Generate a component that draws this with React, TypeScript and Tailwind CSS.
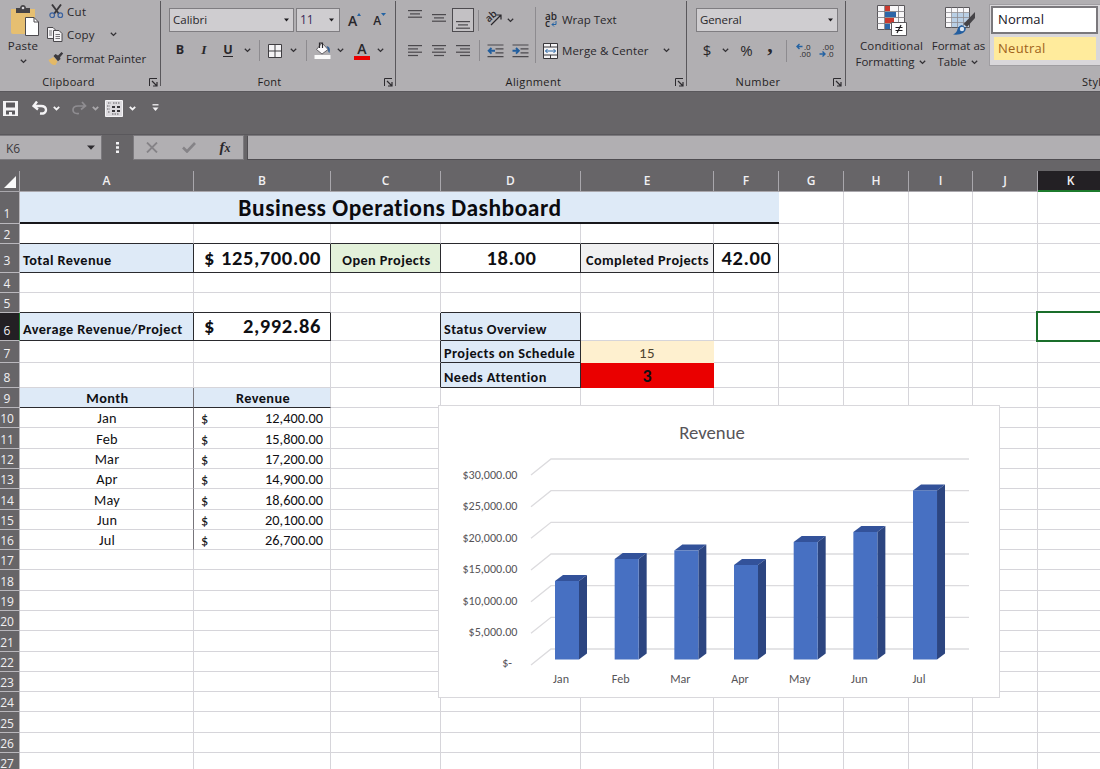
import React from "react";

const CALIBRI = "font-['Carlito','Lato',sans-serif]";

function Chevron({ light = false, dim = false }: { light?: boolean; dim?: boolean }) {
  return (
    <svg width="7" height="5" viewBox="0 0 7 5" className="shrink-0">
      <path d="M0.8 0.8 L3.5 3.4 L6.2 0.8" fill="none" strokeWidth={light ? 1.8 : 1.3} stroke={dim ? "#a9a7aa" : light ? "#f4f3f5" : "#333135"} />
    </svg>
  );
}

function Caret() {
  return (
    <svg width="5" height="4" viewBox="0 0 5 4" className="shrink-0">
      <path d="M0 0.5 H5 L2.5 3.6 Z" fill="#1d1b1f" />
    </svg>
  );
}

function Slot({ className, children }: { className: string; children?: React.ReactNode }) {
  return <div className={`flex h-full shrink-0 items-center justify-center ${className}`}>{children}</div>;
}

function Launcher() {
  return (
    <svg width="9" height="9" viewBox="0 0 9 9" className="shrink-0">
      <path d="M0.5 8 V0.5 H8" fill="none" stroke="#2d2b2f" />
      <path d="M3 3 L7.5 7.5 M8 4 V8 H4" fill="none" stroke="#2d2b2f" strokeWidth="1.2" />
    </svg>
  );
}

function Group({ width, label, labelClass, launcher = true, children }: { width: string; label: string; labelClass: string; launcher?: boolean; children: React.ReactNode }) {
  return (
    <div className={`flex h-[91px] shrink-0 flex-col ${width}`}>
      <div className="h-[73px] shrink-0">{children}</div>
      <div className="flex h-[18px] items-center text-[11px] text-[#1f1d21]">
        <span className={`shrink-0 whitespace-nowrap text-center ${labelClass}`}>{label}</span>
        {launcher && <Launcher />}
      </div>
    </div>
  );
}

function Divider() {
  return <div className="mt-px h-[85px] w-px shrink-0 bg-[#59575b]" />;
}

function Lines({ rows, offset = 0 }: { rows: number[][]; offset?: number }) {
  return (
    <svg width="15" height="14" viewBox="0 0 15 14" className="shrink-0">
      {rows.map(([x, w], i) => (
        <rect key={i} x={x} y={offset + i * 3.3} width={w} height="1.2" fill="#4b494d" />
      ))}
    </svg>
  );
}

function PasteIcon() {
  return (
    <svg width="30" height="32" viewBox="0 0 30 32">
      <path d="M1 5 H25 V30 H3 Q1 30 1 28Z" fill="#e6bf71" />
      <path d="M6 4 H10 Q10.500 1 13 1 Q15.500 1 16 4 H20 V9 H6Z" fill="#454347" />
      <circle cx="13" cy="4" r="1.300" fill="#d8d6da" />
      <path d="M15.500 13.500 H24 L28.500 18 V31.500 H15.500Z" fill="#fff" stroke="#4c4a4e" />
      <path d="M24 13.500 V18 H28.500" fill="none" stroke="#4c4a4e" />
    </svg>
  );
}

function CutIcon() {
  return (
    <svg width="15" height="15" viewBox="0 0 15 15">
      <path d="M3 0.5 L10 10 M12 0.5 L5 10" stroke="#3a383c" strokeWidth="1.900" />
      <circle cx="3.200" cy="11.200" r="2.300" fill="none" stroke="#3a62a0" strokeWidth="1.200" />
      <circle cx="11.300" cy="11.200" r="2.300" fill="none" stroke="#3a62a0" strokeWidth="1.200" />
    </svg>
  );
}

function CopyIcon() {
  return (
    <svg width="16" height="15" viewBox="0 0 16 15">
      <path d="M0.5 0.5 H6 L8.500 3 V11.500 H0.500Z" fill="#f5f4f6" stroke="#4a484c" />
      <path d="M2 4 H5 M2 6 H5 M2 8 H5" stroke="#6a686c" strokeWidth="0.900" />
      <path d="M6.500 3.500 H12 L15 6.500 V14.500 H6.500Z" fill="#f5f4f6" stroke="#4a484c" />
      <path d="M8.500 7.500 H13 M8.500 9.500 H13 M8.500 11.500 H13" stroke="#6a686c" strokeWidth="0.900" />
    </svg>
  );
}

function BrushIcon() {
  return (
    <svg width="16" height="15" viewBox="0 0 16 15">
      <path d="M0.500 9 L5.500 6 L9.500 10.500 L7.500 14 Q3 14.500 0.500 9Z" fill="#e3b967" />
      <path d="M5.500 5 L7.500 3 L10 4.500 L13.500 1 L15.200 2.600 L12 6.300 L12.500 8 L10 10.200Z" fill="#3b393d" />
    </svg>
  );
}

function Ribbon() {
  return (
    <div className="flex h-[91px] shrink-0 overflow-hidden bg-[#b1afb2] text-[11.5px] text-[#29272b]">
      <Group width="w-[160px]" label="Clipboard" labelClass="w-[137px] mr-[12px] tracking-[0.3px]">
        <div className="flex h-full">
          <div className="flex w-[46px] shrink-0 flex-col items-center pt-[4px]">
            <div className="pl-[4px]"><PasteIcon /></div>
            <span className="mt-[1px] leading-[18px] tracking-[0.2px]">Paste</span>
            <div className="mt-[4px]"><Chevron /></div>
          </div>
          <div className="flex flex-col whitespace-nowrap">
            <div className="flex h-[23px] items-center pl-[3px]"><CutIcon /><span className="ml-[3px] tracking-[0.3px]">Cut</span></div>
            <div className="flex h-[23px] items-center pl-[1px]">
              <CopyIcon /><span className="ml-[4px] w-[43px] tracking-[0.2px]">Copy</span><Chevron />
            </div>
            <div className="flex h-[25px] items-center pl-[2px]"><BrushIcon /><span className="ml-[2px]">Format Painter</span></div>
          </div>
        </div>
      </Group>
      <Divider />
      <Group width="w-[234px]" label="Font" labelClass="w-[217px] mr-[6px] tracking-[0.2px]">
        <div className="flex h-[32px] items-end pl-[8px]">
          <div className="flex h-[24px] w-[125px] items-center justify-between border border-[#7f7d81] bg-[#cfcdd0] px-[3px] pr-[4px]">
            <span>Calibri</span><Caret />
          </div>
          <div className="ml-[2px] flex h-[24px] w-[44px] items-center justify-between border border-[#7f7d81] bg-[#cfcdd0] px-[3px] pr-[5px]">
            <span className="text-[12px] text-[#3b2858]">11</span><Caret />
          </div>
          <div className="ml-[8px] flex h-[24px] items-center font-semibold">
            <span className="text-[14px]">A</span>
            <svg width="4" height="3" viewBox="0 0 4 3" className="mb-[11px]"><path d="M0 3 H4 L2 0Z" fill="#2463a3" /></svg>
          </div>
          <div className="ml-[12px] flex h-[24px] items-center font-semibold">
            <span className="pt-[2px] text-[12px]">A</span>
            <svg width="5" height="3" viewBox="0 0 5 3" className="mb-[12px]"><path d="M0 0 H5 L2.500 3Z" fill="#2463a3" /></svg>
          </div>
        </div>
        <div className="flex h-[37px] items-center pl-[7px]">
          <Slot className="w-[24px] text-[12.5px] font-bold">B</Slot>
          <Slot className="w-[24px] font-['Liberation_Serif',serif] text-[13.5px] font-bold italic">I</Slot>
          <Slot className="w-[24px]"><span className="border-b border-[#29272b] text-[12.5px] font-bold leading-[12px]">U</span></Slot>
          <Slot className="w-[14px]"><Chevron /></Slot>
          <Slot className="w-[11px]"><i className="h-[21px] w-px bg-[#8d8b8f]" /></Slot>
          <Slot className="w-[20px]">
            <svg width="14" height="14" viewBox="0 0 14 14"><path d="M0.500 0.500 H13.500 V13.500 H0.500Z" fill="#f5f4f6" stroke="#3f3d41" /><path d="M7 0 V14 M0 7 H14" stroke="#3f3d41" /></svg>
          </Slot>
          <Slot className="w-[16px]"><Chevron /></Slot>
          <Slot className="w-[11px]"><i className="h-[21px] w-px bg-[#8d8b8f]" /></Slot>
          <Slot className="w-[21px]">
            <svg width="18" height="17" viewBox="0 0 18 17">
              <path d="M8 1 L14 7.500 L8 12 L2.500 7.500Z" fill="#fbfafc" stroke="#4a484c" strokeWidth="0.800" />
              <path d="M5.500 6 V1 H8.500 V6" fill="none" stroke="#2b292d" strokeWidth="1.200" />
              <path d="M12.500 4 Q17 4.500 15.500 11 Q14 10.500 14 7.500Z" fill="#305e94" />
              <rect x="0.500" y="13" width="16" height="4" fill="#fafafa" />
            </svg>
          </Slot>
          <Slot className="w-[15px]"><Chevron /></Slot>
          <Slot className="w-[28px]">
            <div className="flex w-[16px] flex-col items-center">
              <span className="text-[14px] font-semibold leading-[14px]">A</span><i className="h-[4px] w-[16px] bg-[#ea0000]" />
            </div>
          </Slot>
          <Slot className="w-[8px]"><Chevron /></Slot>
        </div>
      </Group>
      <Divider />
      <Group width="w-[290px]" label="Alignment" labelClass="w-[275px] mr-[4px] tracking-[0.4px]">
        <div className="flex h-full">
          <div className="w-[139px] shrink-0">
            <div className="flex h-[32px] items-end pl-[7px]">
              <Slot className="h-[32px] w-[24px]"><Lines rows={[[0, 14], [2, 10], [0, 14]]} offset={1} /></Slot>
              <Slot className="h-[32px] w-[25px]"><Lines rows={[[0, 14], [2, 10], [0, 14]]} offset={5} /></Slot>
              <div className="flex h-[24px] w-[22px] shrink-0 items-end justify-center border border-[#4d4b4f] bg-[#c3c1c4] pb-[1px]"><Lines rows={[[0, 14], [2, 10], [0, 14]]} offset={5} /></div>
              <Slot className="w-[9px]"><i className="mt-[8px] h-[21px] w-px bg-[#8d8b8f]" /></Slot>
              <Slot className="w-[22px] pt-[4px]">
                <svg width="18" height="16" viewBox="0 0 18 16" className="overflow-visible">
                  <text x="0" y="11" fontSize="10" fontWeight="600" fill="#29272b" transform="rotate(-42 4 7)">ab</text>
                  <path d="M6 15 L15.500 5.500 M11.500 5 H16 V9.500" fill="none" stroke="#29272b" strokeWidth="1.200" />
                </svg>
              </Slot>
              <Slot className="w-[11px] pt-[8px]"><Chevron /></Slot>
            </div>
            <div className="flex h-[37px] items-center pl-[7px]">
              <Slot className="w-[24px]"><Lines rows={[[0, 14], [0, 10], [0, 14], [0, 10]]} offset={1} /></Slot>
              <Slot className="w-[25px]"><Lines rows={[[0, 14], [2, 10], [0, 14], [2, 10]]} offset={1} /></Slot>
              <Slot className="w-[23px]"><Lines rows={[[0, 14], [4, 10], [0, 14], [4, 10]]} offset={1} /></Slot>
              <Slot className="w-[8px]"><i className="h-[21px] w-px bg-[#8d8b8f]" /></Slot>
              {[0, 1].map((k) => (
                <Slot key={k} className="w-[25px]">
                  <svg width="17" height="14" viewBox="0 0 17 14">
                    <path d="M0.500 1 H16.500 M8.500 4.900 H16.500 M8.500 8.800 H16.500 M0.500 12.700 H16.500" stroke="#4b494d" strokeWidth="1.200" />
                    <path d={k ? "M0.500 6.800 H6.500 M4 4 L6.800 6.800 L4 9.600" : "M2 6.800 H8 M4.500 4 L1.700 6.800 L4.500 9.600"} fill="none" stroke="#215e9e" strokeWidth="1.900" />
                  </svg>
                </Slot>
              ))}
            </div>
          </div>
          <i className="mt-[7px] h-[56px] w-px shrink-0 bg-[#8d8b8f]" />
          <div className="flex flex-col whitespace-nowrap pt-[4px]">
            <div className="flex h-[31px] items-center pl-[9px]">
              <svg width="14" height="16" viewBox="0 0 14 16" fill="#29272b" className="shrink-0 overflow-visible">
                <text x="0" y="7.500" fontSize="10" fontWeight="600">ab</text><text x="0" y="15" fontSize="10" fontWeight="600">c</text>
                <path d="M11 9 V12.500 H7 M9 10.500 L7 12.500 L9 14.500" fill="none" stroke="#2463a3" />
              </svg>
              <span className="ml-[3px]">Wrap Text</span>
            </div>
            <div className="flex h-[31px] items-center pl-[7px]">
              <svg width="15" height="16" viewBox="0 0 15 16" className="shrink-0">
                <path d="M0.500 0.500 H14.500 V15.500 H0.500Z M0.500 4 H14.500 M0.500 12 H14.500 M7.500 0.500 V4 M7.500 12 V15.500" fill="#f5f4f6" stroke="#38363a" />
                <path d="M2.500 8 H12.500 M4.500 6 L2.500 8 L4.500 10 M10.500 6 L12.500 8 L10.500 10" fill="none" stroke="#2463a3" />
              </svg>
              <span className="ml-[4px] w-[101px] tracking-[0.15px]">Merge &amp; Center</span><Chevron />
            </div>
          </div>
        </div>
      </Group>
      <Divider />
      <Group width="w-[158px]" label="Number" labelClass="w-[142px] mr-[4px] tracking-[0.4px]">
        <div className="flex h-[32px] items-end pl-[9px]">
          <div className="flex h-[24px] w-[142px] items-center justify-between border border-[#7f7d81] bg-[#cfcdd0] px-[3px] pr-[4px]"><span className="tracking-[-0.1px]">General</span><Caret /></div>
        </div>
        <div className="flex h-[37px] items-center pl-[9px]">
          <Slot className="w-[22px] text-[15px]">$</Slot>
          <Slot className="w-[14px]"><Chevron /></Slot>
          <Slot className="w-[29px] text-[15px]">%</Slot>
          <Slot className="w-[18px] pb-[12px] font-['Liberation_Serif',serif] text-[22px] font-bold leading-[20px]">,</Slot>
          <Slot className="w-[14px]"><i className="h-[22px] w-px bg-[#8d8b8f]" /></Slot>
          <Slot className="w-[22px]">
            <svg width="17" height="15" viewBox="0 0 17 15" fontSize="8" fill="#29272b" className="overflow-visible">
              <text x="8" y="6.500">.0</text><text x="3.500" y="14">.00</text>
              <path d="M1 3.500 H6.500 M3.500 1 L1 3.500 L3.500 6" fill="none" stroke="#2463a3" strokeWidth="1.400" />
            </svg>
          </Slot>
          <Slot className="w-[25px]">
            <svg width="17" height="15" viewBox="0 0 17 15" fontSize="8" fill="#29272b" className="overflow-visible">
              <text x="3.500" y="6.500">.00</text><text x="8" y="14">.0</text>
              <path d="M0.500 11 H6 M3.500 8.500 L6 11 L3.500 13.500" fill="none" stroke="#2463a3" strokeWidth="1.400" />
            </svg>
          </Slot>
        </div>
      </Group>
      <Divider />
      <Group width="w-[254px]" label="Styles" labelClass="ml-[236px] tracking-[0.3px]" launcher={false}>
        <div className="flex h-full">
          <div className="flex w-[91px] shrink-0 flex-col items-center pt-[5px] leading-[16px]">
            <svg width="32" height="31" viewBox="0 0 32 31">
              <path d="M1.500 0.500 H28.500 V24.500 H1.500Z" fill="#f8f7f9" stroke="#59575b" />
              <path d="M9 1 H14 V6 H9Z M9 13 H18 V18 H9Z" fill="#c9392f" />
              <path d="M9 7 H20 V12 H9Z M9 19 H14 V24 H9Z" fill="#2d66a8" />
              <path d="M1 6.500 H29 M1 12.500 H29 M1 18.500 H29 M8.500 0 V25 M22.500 0 V25" stroke="#77757a" strokeWidth="0.800" />
              <path d="M15.500 17.500 H30.500 V30.500 H15.500Z" fill="#fff" stroke="#59575b" />
              <path d="M19.500 22.500 H26.500 M19.500 25.500 H26.500 M25 20 L21 28" stroke="#1d1b1f" strokeWidth="1.200" />
            </svg>
            <span className="mt-[2px] tracking-[0.15px]">Conditional</span>
            <span className="flex items-center gap-[4px] pr-[2px]">Formatting<Chevron /></span>
          </div>
          <div className="flex w-[43px] shrink-0 flex-col items-center whitespace-nowrap pt-[6px] leading-[16px]">
            <svg width="31" height="30" viewBox="0 0 31 30" className="ml-[3px]">
              <path d="M0.500 1.500 H24.500 V21.500 H0.500Z" fill="#f8f7f9" stroke="#59575b" />
              <path d="M7 7 H24 V21 H7Z" fill="#b9cfe5" />
              <path d="M0.500 6.500 H24.500 M0.500 11.500 H24.500 M0.500 16.500 H24.500 M6.500 1.500 V21.500 M12.500 1.500 V21.500 M18.500 1.500 V21.500" stroke="#8d8b90" strokeWidth="0.800" />
              <path d="M30 6 V12 L22 21 L18.500 18Z" fill="#454347" />
              <path d="M17 19 L21 22.500 Q20 29.500 8 28.500 Q12 26.500 12.500 23 Q14 19.500 17 19Z" fill="#245e9f" />
              <circle cx="17" cy="23" r="2.200" fill="#dbe6f2" />
            </svg>
            <span className="mt-[2px]">Format as</span>
            <span className="flex items-center gap-[4px] pr-[2px]">Table<Chevron /></span>
          </div>
          <div className="ml-[9px] mt-[4px] h-[62px] w-[111px] shrink-0 border border-r-0 border-[#a09ea2] bg-[#d9d7da] pl-[1px] pt-[1px]">
            <div className="flex h-[28px] w-[107px] items-center border-2 border-[#7a787c] bg-white pl-[5px] text-[13px] tracking-[0.1px] text-[#15131d]">Normal</div>
            <div className="ml-[3px] mt-[3px] flex h-[23px] w-[102px] items-center bg-[#ffeb9c] pl-[4px] text-[13px] tracking-[0.3px] text-[#a0621a]">Neutral</div>
          </div>
        </div>
      </Group>
    </div>
  );
}

function QuickAccess() {
  return (
    <div className="flex h-[44px] shrink-0 items-center border-b border-t border-[#5a585c] pb-[10px] text-[#f4f3f5]">
      <Slot className="w-[21px]">
        <svg width="15" height="15" viewBox="0 0 15 15"><path d="M0 0 H15 V15 H0Z" fill="#f4f3f5" /><path d="M3 1.500 H12 V6.500 H3Z M3 9.500 H12 V13.500 H3Z" fill="#5c5a5e" /><path d="M6 11 H9 V14 H6Z" fill="#f4f3f5" /></svg>
      </Slot>
      <Slot className="w-[37px]">
        <svg width="16" height="14" viewBox="0 0 16 14"><path d="M5 0.500 L1.500 5 L6 8.500 M2 5 H9 Q14 5 14 9 Q14 13 8 12.500" fill="none" stroke="#f4f3f5" strokeWidth="2.400" /></svg>
      </Slot>
      <Slot className="-ml-[6px] w-[8px]"><Chevron light /></Slot>
      <Slot className="w-[38px]">
        <svg width="16" height="14" viewBox="0 0 16 14"><path d="M11 1 L14.500 5 L10 8.500 M14 5 H7 Q2 5 2 9 Q2 13 8 12.500" fill="none" stroke="#8f8d91" strokeWidth="1.700" /></svg>
      </Slot>
      <Slot className="-ml-[6px] w-[7px]"><Chevron light dim /></Slot>
      <Slot className="w-[29px]">
        <svg width="18" height="17" viewBox="0 0 18 17">
          <path d="M0.500 0.500 H17.500 V16.500 H0.500Z" fill="#dddbdf" stroke="#f4f3f5" />
          <path d="M3 3 H6 M8 3 H15 M2 6 H5 M2 9 H5 M3 12 H5 M7 14 H14" stroke="#5c5a5e" strokeDasharray="1.500 1" />
          <path d="M7 6 H10 V8 H7Z M12 6 H15 V8 H12Z M7 10 H10 V12 H7Z M12 10 H15 V12 H12Z" fill="#39373b" />
        </svg>
      </Slot>
      <Slot className="w-[8px]"><Chevron light /></Slot>
      <Slot className="w-[38px]">
        <svg width="7" height="8" viewBox="0 0 7 8"><path d="M0.500 0.800 H6.500" stroke="#f4f3f5" strokeWidth="1.300" /><path d="M0.500 3.500 H6.500 L3.500 7Z" fill="#f4f3f5" /></svg>
      </Slot>
    </div>
  );
}

function FormulaBar() {
  return (
    <div className="flex h-[25px] shrink-0 text-[12px] text-[#3b393d]">
      <div className="flex w-[102px] shrink-0 items-center justify-between border border-l-0 border-[#7c7a7e] bg-[#b1afb2] pl-[6px] pr-[6px]">
        <span className="pt-[2px] text-[12px]">K6</span>
        <svg width="8" height="5" viewBox="0 0 8 5"><path d="M0 0.500 H8 L4 4.700Z" fill="#2d2b2f" /></svg>
      </div>
      <Slot className="w-[31px]">
        <svg width="3" height="11" viewBox="0 0 3 11" fill="#f4f3f5"><path d="M0 0 H3 V2.500 H0Z M0 4.200 H3 V6.700 H0Z M0 8.400 H3 V10.900 H0Z" /></svg>
      </Slot>
      <div className="flex w-[111px] shrink-0 items-center border border-[#7c7a7e] bg-[#b1afb2]">
        <Slot className="w-[36px]"><svg width="12" height="11" viewBox="0 0 12 11"><path d="M1 0.500 L11 10.500 M11 0.500 L1 10.500" stroke="#858387" strokeWidth="1.800" /></svg></Slot>
        <Slot className="w-[38px]"><svg width="14" height="11" viewBox="0 0 14 11"><path d="M1 5.500 L5 9.500 L13 1" fill="none" stroke="#858387" strokeWidth="2.600" /></svg></Slot>
        <Slot className="w-[34px]"><span className="font-['Liberation_Serif',serif] text-[15px] font-bold italic leading-[20px] text-[#29272b]">f<span className="text-[12px]">x</span></span></Slot>
      </div>
      <div className="ml-[3px] flex-1 border border-r-0 border-[#4f4d51] border-t-[#7c7a7e] bg-[#b1afb2]" />
    </div>
  );
}

const COLS: [string, string][] = [
  ["A", "w-[174px]"], ["B", "w-[137px]"], ["C", "w-[110px]"], ["D", "w-[140px]"], ["E", "w-[133px]"], ["F", "w-[65px]"],
  ["G", "w-[65px]"], ["H", "w-[65px]"], ["I", "w-[64px]"], ["J", "w-[65px]"], ["K", "w-[66px]"],
];

const ROW_HEIGHTS = [
  "h-[32px]", "h-[20px]", "h-[29px]", "h-[20px]", "h-[20px]", "h-[28px]", "h-[22px]", "h-[25px]", "h-[20px]",
  "h-[20px]", "h-[21px]", "h-[20px]", "h-[20px]", "h-[21px]", "h-[20px]", "h-[20px]", "h-[20px]", "h-[21px]",
  "h-[20px]", "h-[20px]", "h-[21px]", "h-[20px]", "h-[20px]", "h-[20px]", "h-[21px]", "h-[20px]", "h-[20px]",
];

function Money({ children, big = false }: { children: string; big?: boolean }) {
  return (
    <span className={big ? "flex w-full justify-between pl-[10px] pr-[9px]" : "flex w-full justify-between pl-[7px] pr-[7px]"}>
      <span>$</span><span>{children}</span>
    </span>
  );
}

const BOLD = "text-[14.3px] font-bold tracking-[0.4px]";
const LABEL = `bg-[#deeaf7] ${BOLD}`;
const BIG = "text-[20.5px] font-bold leading-[27px] tracking-[0.62px]";
const B = "border-b-[#2a2a2e]";
const R = "border-r-[#2a2a2e]";

type Cell = { text?: React.ReactNode; cls: string };
const CELLS: Record<string, Cell> = {
  A2: { cls: B }, B2: { cls: B }, C2: { cls: B }, D2: { cls: B }, E2: { cls: B }, F2: { cls: B },
  A3: { text: "Total Revenue", cls: `${LABEL} leading-[24px] ${B} ${R} pl-[3px]` },
  B3: { text: <Money big>125,700.00</Money>, cls: `${BIG} ${B} ${R}` },
  C3: { text: "Open Projects", cls: `bg-[#e3f1da] ${BOLD} pl-[2px] leading-[24px] justify-center ${B} ${R}` },
  D3: { text: "18.00", cls: `${BIG} pl-[2px] justify-center ${B} ${R}` },
  E3: { text: "Completed Projects", cls: `bg-[#f0f0f1] ${BOLD} pl-px leading-[24px] justify-center ${B} ${R}` },
  F3: { text: "42.00", cls: `${BIG} pl-px justify-center ${B} ${R}` },
  A5: { cls: B }, B5: { cls: B }, D5: { cls: B },
  A6: { text: "Average Revenue/Project", cls: `${LABEL} leading-[21px] ${B} ${R} pl-[3px]` },
  B6: { text: <Money big>2,992.86</Money>, cls: `${BIG} leading-[25px] ${B} ${R}` },
  C6: { cls: R }, C7: { cls: R }, C8: { cls: R },
  D6: { text: "Status Overview", cls: `${LABEL} leading-[22px] ${B} ${R} pl-[3px]` },
  D7: { text: "Projects on Schedule", cls: `${LABEL} leading-[18px] ${B} ${R} pl-[3px]` },
  D8: { text: "Needs Attention", cls: `${LABEL} leading-[20px] ${B} ${R} pl-[3px]` },
  E7: { text: "15", cls: "bg-[#fef0cf] border-[#fef0cf] justify-center text-[15px] tracking-[0.3px] leading-[18px] text-[#4f452f]" },
  E8: { text: "3", cls: "bg-[#ea0000] border-[#ea0000] justify-center text-[18px] font-bold leading-[22px]" },
  A9: { text: "Month", cls: `bg-[#deeaf7] pl-[2px] justify-center ${BOLD} leading-[17px] ${B} border-r-[#77757b]` },
  B9: { text: "Revenue", cls: `bg-[#deeaf7] pl-[2px] justify-center ${BOLD} leading-[17px] ${B}` },
};
[["Jan", "12,400.00"], ["Feb", "15,800.00"], ["Mar", "17,200.00"], ["Apr", "14,900.00"], ["May", "18,600.00"], ["Jun", "20,100.00"], ["Jul", "26,700.00"]].forEach(([m, v], i) => {
  CELLS[`A${10 + i}`] = { text: m, cls: "pl-px justify-center text-[14.3px] tracking-[0.2px] leading-[17px] border-r-[#77757b]" };
  CELLS[`B${10 + i}`] = { text: <Money>{v}</Money>, cls: "text-[14.3px] leading-[17px]" };
});

const BARS: [string, number][] = [["Jan", 581], ["Feb", 559], ["Mar", 550.5], ["Apr", 565], ["May", 542], ["Jun", 532], ["Jul", 490.5]];
const TICKS = ["$30,000.00", "$25,000.00", "$20,000.00", "$15,000.00", "$10,000.00", "$5,000.00", "$-"];

function Chart() {
  return (
    <svg width="562" height="293" viewBox="438 405 562 293" className={`absolute left-[438px] top-[213px] ${CALIBRI}`}>
      <rect x="438.5" y="405.5" width="561" height="292" fill="#fff" stroke="#d9d8dc" />
      <text x="712" y="438.500" fontSize="18.700" textAnchor="middle" fill="#565458">Revenue</text>
      {TICKS.map((t, i) => (
        <g key={t}>
          <path d={`M531 ${475 + i * 31.67} L551 ${459 + i * 31.67} H969`} fill="none" stroke="#dcdbde" strokeWidth="1.300" />
          <text x={i === 6 ? 512 : 517.5} y={479 + i * 31.4} fontSize="12.100" textAnchor="end" fill="#565458">{t}</text>
        </g>
      ))}
      {BARS.map(([m, y], i) => {
        const x = 555 + i * 59.67;
        return (
          <g key={m}>
            <path d={`M${x} ${y} L${x + 8} ${y - 6} H${x + 32} L${x + 24} ${y}Z`} fill="#33529a" />
            <path d={`M${x + 24} ${y} L${x + 32} ${y - 6} V653.500 L${x + 24} 659.500Z`} fill="#2c4580" />
            <path d={`M${x} ${y} H${x + 24} V659.500 H${x}Z`} fill="#4770c2" />
            <text x={x + 6} y="683" fontSize="12.100" textAnchor="middle" fill="#565458">{m}</text>
          </g>
        );
      })}
    </svg>
  );
}

function Sheet() {
  return (
    <div className="flex min-h-0 flex-1 flex-col">
      <div className="flex h-[21px] shrink-0 text-[12px] font-semibold text-[#f1f0f2]">
        <div className="flex w-[20px] shrink-0 items-end justify-end border-b border-r border-[#a9a7ac] pb-[3px] pr-[3px]">
          <svg width="12" height="12" viewBox="0 0 12 12"><path d="M12 0 V12 H0Z" fill="#fafafa" /></svg>
        </div>
        {COLS.map(([c, w]) => (
          <div key={c} className={`flex shrink-0 items-center justify-center border-b border-r ${w} ${c === "K" ? "border-b-2 border-[#1c7a2c] bg-[#232024]" : "border-[#a9a7ac]"}`}>{c}</div>
        ))}
      </div>
      <div className="relative min-h-0 flex-1 overflow-hidden bg-white">
        {ROW_HEIGHTS.map((h, i) => {
          const r = i + 1;
          const tall = r === 1 || r === 6 || r === 8;
          return (
            <div key={r} className={`flex ${h}`}>
              <div className={`flex w-[20px] shrink-0 items-end justify-center border-b border-r pr-[5px] text-[12px] text-[#f1f0f2] ${r === 3 ? "leading-[22px]" : tall ? "leading-[19px]" : "leading-[17px]"} ${r === 6 ? "border-b-[#b9b7bc] border-r-[#1c7a2c] bg-[#232024]" : "border-[#b9b7bc] bg-[#676568]"}`}>{r}</div>
              {COLS.map(([c, w], k) => {
                if (r === 1 && k < 6) {
                  return k === 0 ? (
                    <div key={c} className={`flex w-[759px] shrink-0 items-center justify-center border-b-2 border-[#17171b] bg-[#deeaf7] pl-px pt-[2px] text-[23.5px] font-bold leading-[28px] tracking-[0.5px] text-[#0b0b0f] ${CALIBRI}`}>Business Operations Dashboard</div>
                  ) : null;
                }
                const cell = CELLS[`${c}${r}`];
                const tone = cell ? cell.cls : "";
                const right = tone.includes("border-r-[") || tone.includes("border-[") ? "" : "border-r-[#d6d5da]";
                const bottom = tone.includes("border-b-[") || tone.includes("border-[") ? "" : "border-b-[#d6d5da]";
                return (
                  <div key={c} className={`flex shrink-0 items-end overflow-hidden whitespace-nowrap border-b border-r text-[#0f0f13] ${CALIBRI} ${w} ${right} ${bottom} ${tone}`}>
                    {cell?.text}
                  </div>
                );
              })}
            </div>
          );
        })}
        <Chart />
        <div className="absolute left-[1036px] top-[119px] h-[31px] w-[70px] border-2 border-[#1a6e2b]" />
      </div>
    </div>
  );
}

export default function App() {
  return (
    <div className="flex h-[769px] w-[1100px] flex-col overflow-hidden bg-[#676568] font-['Open_Sans','Noto_Sans',sans-serif]">
      <Ribbon />
      <QuickAccess />
      <FormulaBar />
      <div className="h-[11px] shrink-0" />
      <Sheet />
    </div>
  );
}
